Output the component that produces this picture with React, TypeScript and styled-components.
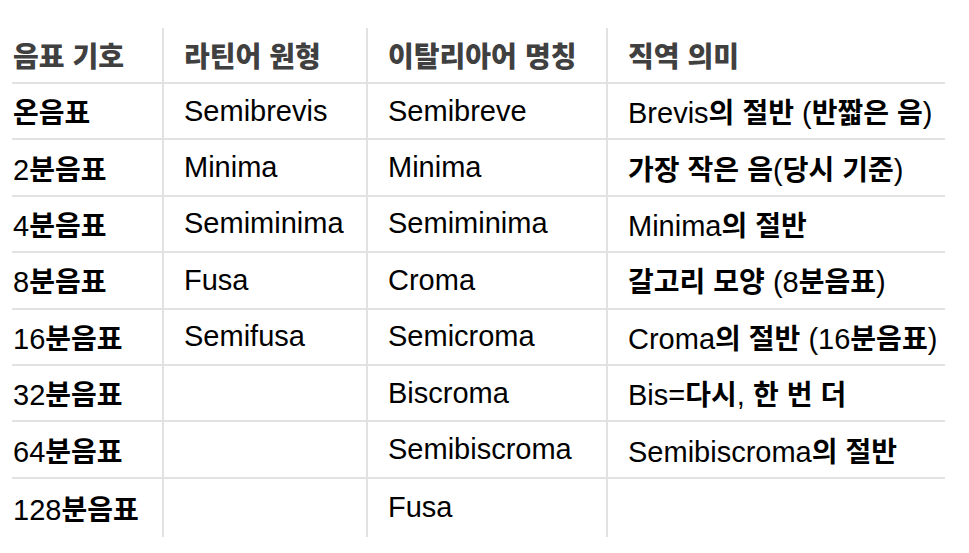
import React from "react"
import styled, { createGlobalStyle } from "styled-components"

const GlobalStyle = createGlobalStyle`
  html, body {
    margin: 0;
    padding: 0;
    background: #fff;
  }
  body {
    font-family: "Liberation Sans", Arial, "Noto Sans CJK KR", sans-serif;
  }
`

const Table = styled.table`
  margin: 28px 0 0 12px;
  width: 933px;
  table-layout: fixed;
  border-collapse: collapse;
  font-size: 29px;
  color: #000;
`

const HeadCell = styled.th`
  height: 54px;
  padding: 0 20px;
  text-align: left;
  vertical-align: middle;
  font-weight: 700;
  color: #404040;
  white-space: nowrap;
  border-bottom: 2px solid #e2e2e2;
  border-left: 2px solid #e2e2e2;

  &:first-child {
    padding-left: 1px;
    border-left: none;
  }
`

const Row = styled.tr`
  &:last-child td {
    border-bottom: none;
    height: 58px;
  }
`

const Cell = styled.td`
  height: 54.4px;
  padding: 0 20px;
  vertical-align: middle;
  white-space: nowrap;
  border-bottom: 2px solid #e2e2e2;
  border-left: 2px solid #e2e2e2;

  &:first-child {
    padding-left: 1px;
    border-left: none;
  }
`

const Hangul = styled.span<{ $heavy?: boolean }>`
  font-family: "Noto Sans CJK KR", sans-serif;
  font-size: 28px;
  font-weight: ${(p) => (p.$heavy ? 900 : 700)};
`

// Latin stays regular Arial-like, Korean runs get the heavy CJK face
const mixed = (text: string, heavy = false) =>
  text.split(/([\uAC00-\uD7A3]+)/).map((part, i) =>
    /[\uAC00-\uD7A3]/.test(part) ? (
      <Hangul key={i} $heavy={heavy}>
        {part}
      </Hangul>
    ) : (
      part
    )
  )

const columns = [
  { title: "음표 기호", width: 151 },
  { title: "라틴어 원형", width: 204 },
  { title: "이탈리아어 명칭", width: 240 },
  { title: "직역 의미", width: 338 },
]

const rows = [
  ["온음표", "Semibrevis", "Semibreve", "Brevis의 절반 (반짧은 음)"],
  ["2분음표", "Minima", "Minima", "가장 작은 음(당시 기준)"],
  ["4분음표", "Semiminima", "Semiminima", "Minima의 절반"],
  ["8분음표", "Fusa", "Croma", "갈고리 모양 (8분음표)"],
  ["16분음표", "Semifusa", "Semicroma", "Croma의 절반 (16분음표)"],
  ["32분음표", "", "Biscroma", "Bis=다시, 한 번 더"],
  ["64분음표", "", "Semibiscroma", "Semibiscroma의 절반"],
  ["128분음표", "", "Fusa", ""],
]

const App = () => {
  return (
    <>
      <GlobalStyle />
      <Table>
        <colgroup>
          {columns.map((c) => (
            <col key={c.title} style={{ width: c.width }} />
          ))}
        </colgroup>
        <thead>
          <tr>
            {columns.map((c) => (
              <HeadCell key={c.title}>{mixed(c.title, true)}</HeadCell>
            ))}
          </tr>
        </thead>
        <tbody>
          {rows.map((r) => (
            <Row key={r[0]}>
              {r.map((v, i) => (
                <Cell key={i}>{mixed(v)}</Cell>
              ))}
            </Row>
          ))}
        </tbody>
      </Table>
    </>
  )
}

export default App
